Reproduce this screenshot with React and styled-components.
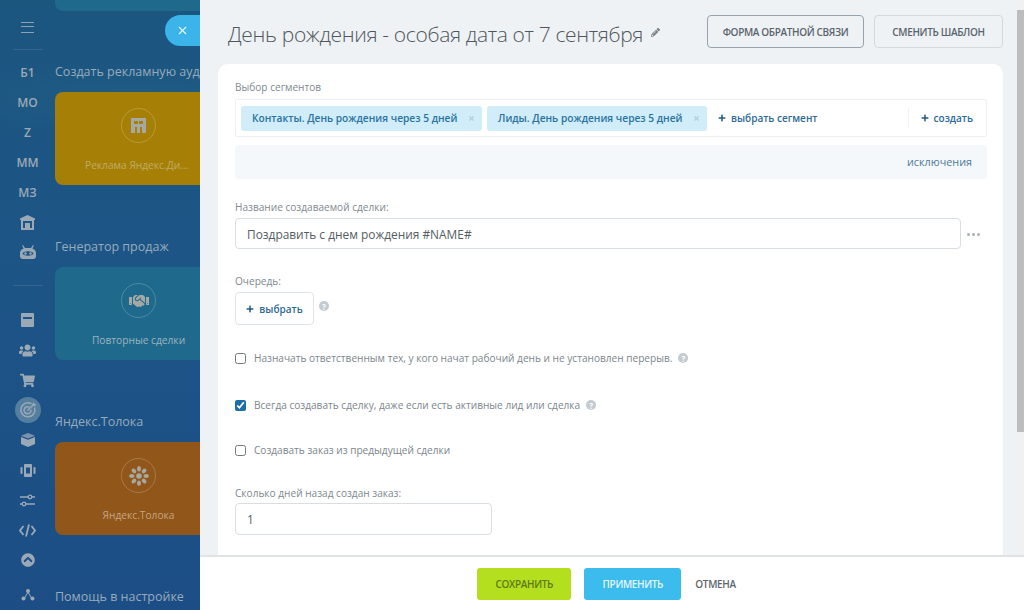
// App.jsx
import React from 'react';
import styled, { createGlobalStyle } from 'styled-components';
import {
  FaUsers,
  FaShoppingCart,
  FaHandshake,
  FaChevronCircleUp,
  FaPencilAlt,
  FaTimes,
  FaPlus,
} from 'react-icons/fa';
import { X } from 'lucide-react';

const GlobalStyle = createGlobalStyle`
  html, body {
    margin: 0;
    padding: 0;
    height: 100%;
    overflow: hidden;
  }
  body {
    font-family: "Open Sans", "Liberation Sans", sans-serif;
  }
  * { box-sizing: border-box; }
`;

const Page = styled.div`
  position: relative;
  display: flex;
  width: 1024px;
  height: 610px;
  overflow: hidden;
`;

/* ---------- dimmed background page ---------- */

const Backdrop = styled.div`
  display: flex;
  width: 200px;
  height: 610px;
  flex-shrink: 0;
  overflow: hidden;
  background:
    radial-gradient(ellipse 200px 36px at 130px 96px, rgba(40, 105, 135, 0.3), transparent),
    linear-gradient(180deg, #1b567f 0%, #1d5586 40%, #1c4e85 100%);
`;

const Rail = styled.nav`
  display: flex;
  flex-direction: column;
  align-items: center;
  width: 55px;
  flex-shrink: 0;
  padding-top: 12px;
  color: #97a6b5;
`;

const RailItem = styled.div`
  display: flex;
  align-items: center;
  justify-content: center;
  width: 100%;
  height: 30px;
  flex-shrink: 0;
  margin-top: ${(p) => p.$top || 0}px;
  font-size: 12px;
  font-weight: 600;
  color: #9ba9b7;
`;

const ActiveDot = styled.div`
  display: flex;
  align-items: center;
  justify-content: center;
  width: 26px;
  height: 26px;
  border-radius: 50%;
  background: #557f9f;
`;

const RailDivider = styled.div`
  width: 30px;
  height: 1px;
  flex-shrink: 0;
  background: #336590;
  margin: ${(p) => p.$margin};
`;

const Burger = styled.div`
  width: 13px;
  height: 11px;
  border-top: 1.5px solid #8ea2b4;
  border-bottom: 1.5px solid #8ea2b4;
  position: relative;

  &::after {
    content: '';
    position: absolute;
    left: 0;
    right: 0;
    top: 3px;
    height: 1.5px;
    background: #8ea2b4;
  }
`;

const Feed = styled.div`
  width: 165px;
  flex-shrink: 0;
`;

const TopCard = styled.div`
  height: 11px;
  background: #1f6a8c;
  border-radius: 0 0 8px 8px;
  margin-bottom: 51px;
`;

const SectionTitle = styled.div`
  height: 20px;
  line-height: 20px;
  margin-bottom: 10px;
  font-size: 12.5px;
  color: #97abbc;
  white-space: nowrap;
`;

const Tile = styled.div`
  display: flex;
  flex-direction: column;
  align-items: center;
  height: 93px;
  margin-bottom: 52px;
  padding: 16px 26px 0 28px;
  border-radius: 8px;
  background: ${(p) => p.$color};
  color: ${(p) => p.$ink};
`;

const TileIcon = styled.div`
  display: flex;
  align-items: center;
  justify-content: center;
  width: 35px;
  height: 35px;
  border-radius: 50%;
  border: 1px solid rgba(255, 255, 255, 0.2);
  color: #a6a8a4;
  flex-shrink: 0;
`;

const TileLabel = styled.div`
  width: 107px;
  margin-top: 14px;
  font-size: 10.2px;
  font-weight: 500;
  line-height: 16px;
  text-align: center;
  white-space: nowrap;
  overflow: hidden;
  text-overflow: ellipsis;
`;

const CloseTab = styled.div`
  position: absolute;
  left: 165px;
  top: 15px;
  width: 35px;
  height: 31px;
  display: flex;
  align-items: center;
  justify-content: center;
  border-radius: 16px 0 0 16px;
  background: #3bb4e9;
  color: #e8f7fd;
`;

/* ---------- slide panel ---------- */

const Panel = styled.div`
  display: flex;
  flex-direction: column;
  flex: 1;
  min-width: 0;
  height: 610px;
  background: #eef2f5;
`;

const PanelBody = styled.div`
  display: flex;
  flex: 1;
  min-height: 0;
`;

const Scroller = styled.div`
  flex: 1;
  min-width: 0;
  overflow: hidden;
  padding: 15px 14px 0 18px;
`;

const ScrollTrack = styled.div`
  width: 7px;
  flex-shrink: 0;
  padding-top: 10px;
  background: #f1f1f1;
`;

const ScrollThumb = styled.div`
  height: 422px;
  background: #bdbdbd;
`;

const Header = styled.div`
  display: flex;
  align-items: flex-start;
  height: 49px;
  padding-left: 10px;
`;

const Title = styled.h1`
  display: flex;
  align-items: center;
  gap: 8px;
  flex: 1;
  margin: 0;
  height: 38px;
  font-size: 21px;
  font-weight: 300;
  letter-spacing: -0.35px;
  color: #50575c;
  white-space: nowrap;
`;

const EditMark = styled.span`
  display: flex;
  color: #777f85;
  margin-top: -4px;
`;

const HeaderButton = styled.div`
  display: flex;
  align-items: center;
  justify-content: center;
  width: ${(p) => p.$width}px;
  height: 33px;
  margin-left: ${(p) => p.$gap}px;
  border: 1px solid ${(p) => (p.$strong ? '#98a4ad' : '#d3dade')};
  border-radius: 4px;
  font-size: 10px;
  font-weight: 600;
  letter-spacing: -0.35px;
  color: #5a646c;
`;

const Card = styled.div`
  padding: 16px 16px 0 17px;
  min-height: 560px;
  background: #fff;
  border-radius: 10px 10px 0 0;
`;

const Label = styled.div`
  font-size: 10.1px;
  line-height: 15px;
  color: #80898f;
  margin-top: ${(p) => p.$top || 0}px;
  margin-bottom: ${(p) => p.$bottom || 4}px;
`;

const SegmentBox = styled.div`
  display: flex;
  align-items: center;
  height: 38px;
  padding: 0 13px 0 5px;
  border: 1px solid #edf0f2;
  border-radius: 2px;
`;

const Segment = styled.div`
  display: flex;
  align-items: center;
  justify-content: space-between;
  width: ${(p) => p.$width}px;
  height: 25px;
  margin-right: 5px;
  padding: 0 7px 0 11px;
  border-radius: 3px;
  background: #d0edf9;
  font-size: 10.2px;
  font-weight: 600;
  color: #2a729f;
  white-space: nowrap;
`;

const SegmentX = styled.span`
  display: flex;
  color: #b4cfdc;
`;

const AddLink = styled.div`
  display: flex;
  align-items: center;
  gap: 5px;
  font-size: 10px;
  font-weight: 600;
  color: #2d6a96;
  white-space: nowrap;
`;

const PlusMark = styled.span`
  display: flex;
  color: #1f5a88;
`;

const PickLink = styled(AddLink)`
  flex: 1;
  margin-left: 6px;
`;

const CreateLink = styled(AddLink)`
  height: 20px;
  padding-left: 12px;
  border-left: 1px solid #f0f3f5;
`;

const ExceptionsBar = styled.div`
  display: flex;
  align-items: center;
  justify-content: flex-end;
  height: 34px;
  margin-top: 8px;
  padding: 0 15px 2px 0;
  border-radius: 4px;
  background: #f5f8fa;
  font-size: 10.8px;
  color: #4f7b9b;
`;

const NameRow = styled.div`
  display: flex;
  align-items: center;
`;

const Field = styled.div`
  display: flex;
  align-items: center;
  width: ${(p) => p.$width}px;
  height: ${(p) => p.$height}px;
  padding-left: 11px;
  border: 1px solid #d9dee2;
  border-radius: 4px;
  font-size: 11.9px;
  color: #555d63;
`;

const MoreDots = styled.div`
  display: flex;
  gap: 2px;
  margin-left: 6px;
  margin-top: 2px;
`;

const Dot = styled.span`
  width: 3px;
  height: 3px;
  border-radius: 50%;
  background: #a8b1b8;
`;

const QueueRow = styled.div`
  display: flex;
  align-items: flex-start;
  gap: 5px;
`;

const QueueButton = styled(AddLink)`
  justify-content: center;
  width: 79px;
  height: 33px;
  border: 1px solid #dfe4e8;
  border-radius: 4px;
`;

const Help = styled.span`
  display: inline-flex;
  align-items: center;
  justify-content: center;
  width: 10px;
  height: 10px;
  flex-shrink: 0;
  margin-top: ${(p) => p.$top || 0}px;
  border-radius: 50%;
  background: #c3cad0;
  color: #fff;
  font-size: 8px;
  font-weight: 700;
`;

const CheckRow = styled.label`
  display: flex;
  align-items: center;
  height: 16px;
  margin-top: ${(p) => p.$top}px;
  font-size: 10.1px;
  color: #7d868c;
  white-space: nowrap;
`;

const CheckBox = styled.input`
  width: 11px;
  height: 11px;
  margin: 0 8px 0 0;
  flex-shrink: 0;
  accent-color: #1c6ea8;
`;

const CheckHelp = styled(Help)`
  margin-left: 6px;
`;

const Footer = styled.div`
  display: flex;
  align-items: center;
  justify-content: center;
  height: 55px;
  flex-shrink: 0;
  padding-right: 11px;
  padding-top: 1px;
  border-top: 2px solid #dfe3e6;
  background: #fff;
`;

const FooterButton = styled.div`
  display: flex;
  align-items: center;
  justify-content: center;
  width: ${(p) => p.$width}px;
  height: 32px;
  margin-right: ${(p) => p.$gap}px;
  border-radius: 3px;
  background: ${(p) => p.$bg};
  color: ${(p) => p.$ink};
  font-size: 10px;
  font-weight: 600;
  letter-spacing: -0.35px;
`;

const CancelLink = styled.div`
  font-size: 10px;
  font-weight: 600;
  letter-spacing: -0.35px;
  color: #5d666c;
`;

/* ---------- drawn icons ---------- */

const WarehouseIcon = () => (
  <svg width="15" height="15" viewBox="0 0 15 15" fill="currentColor">
    <path d="M7.500 0L15 3.500V5h-1v10H1V5H0V3.500zM3 6v7h9V6zm2 2h5v5H5z" fillRule="evenodd" />
    <rect x="6.500" y="9.500" width="2" height="2" />
  </svg>
);

const AndroidIcon = () => (
  <svg width="16" height="14" viewBox="0 0 16 14" fill="currentColor">
    <path d="M3 0l2 3h6l2-3 .8.5L12.400 3.400C14.600 4.200 16 6 16 8v3a3 3 0 0 1-3 3H3a3 3 0 0 1-3-3V8c0-2 1.400-3.800 3.600-4.600L2.200.5z" />
    <ellipse cx="8" cy="8.500" rx="5.500" ry="2.200" fill="#1d5586" />
    <circle cx="5.500" cy="8.500" r="1.200" />
    <circle cx="10.500" cy="8.500" r="1.200" />
  </svg>
);

const CalendarBoxIcon = () => (
  <svg width="13" height="14" viewBox="0 0 13 14" fill="currentColor">
    <path d="M1 0h11a1 1 0 0 1 1 1v12a1 1 0 0 1-1 1H1a1 1 0 0 1-1-1V1a1 1 0 0 1 1-1zm1 4v2h9V4z" fillRule="evenodd" />
  </svg>
);

const TargetIcon = () => (
  <svg width="18" height="18" viewBox="0 0 18 18" fill="none" stroke="currentColor" strokeWidth="1.400">
    <path d="M12.500 2.800A7 7 0 1 0 15.500 6.500" />
    <path d="M10.300 6.200A3.500 3.500 0 1 0 12 8.600" />
    <path d="M8.500 9.500L15 3" />
    <path d="M13 3.500L15 1l.5 2L17.500 3.500 15 5.500z" fill="currentColor" stroke="none" />
  </svg>
);

const CubeIcon = () => (
  <svg width="14" height="14" viewBox="0 0 14 14" fill="currentColor">
    <path d="M7 0l7 2.800L7 5.600 0 2.800z" opacity="0.75" />
    <path d="M0 4l7 2.800L14 4v7l-7 3-7-3z" />
  </svg>
);

const VibrateIcon = () => (
  <svg width="16" height="13" viewBox="0 0 16 13" fill="currentColor">
    <path d="M5 0h6a1 1 0 0 1 1 1v11a1 1 0 0 1-1 1H5a1 1 0 0 1-1-1V1a1 1 0 0 1 1-1zm1 3.500v6h4v-6z" fillRule="evenodd" />
    <rect x="0.500" y="3" width="2" height="7" rx="0.800" />
    <rect x="13.500" y="3" width="2" height="7" rx="0.800" />
  </svg>
);

const SlidersIcon = () => (
  <svg width="15" height="13" viewBox="0 0 15 13" fill="none" stroke="currentColor" strokeWidth="1.300">
    <path d="M0 3h8M12 3h3M0 10h2M6 10h9" />
    <circle cx="10" cy="3" r="1.800" />
    <circle cx="4" cy="10" r="1.800" />
  </svg>
);

const CodeIcon = () => (
  <svg width="17" height="13" viewBox="0 0 17 13" fill="none" stroke="currentColor" strokeWidth="1.800">
    <path d="M4.500 2L1 6.500 4.500 11M12.500 2L16 6.500 12.500 11M10 0.500L7 12.500" />
  </svg>
);

const NodesIcon = () => (
  <svg width="14" height="13" viewBox="0 0 14 13" fill="currentColor">
    <circle cx="7" cy="3" r="2" />
    <circle cx="2.500" cy="10.500" r="2" />
    <circle cx="11.500" cy="10.500" r="2" />
    <path d="M6.500 4l-3.500 6 .8.400 3.200-5.500 3.200 5.500.8-.4L7.500 4z" />
  </svg>
);

const StoreIcon = () => (
  <svg width="15" height="15" viewBox="0 0 15 15" fill="currentColor">
    <path d="M0 0h15v15h-4V9H9v6H6V9H4v6H0zm3 3v3h4V3zm5 0v3h4V3z" fillRule="evenodd" />
  </svg>
);

const FlowerIcon = () => (
  <svg width="20" height="20" viewBox="0 0 20 20" fill="currentColor">
    {[0, 45, 90, 135, 180, 225, 270, 315].map((deg) => (
      <ellipse key={deg} cx="10" cy="2.800" rx="2" ry="2.700" transform={`rotate(${deg} 10 10)`} />
    ))}
    <circle cx="10" cy="10" r="2.800" />
  </svg>
);

const railTexts = ['Б1', 'МО', 'Z', 'ММ', 'МЗ'];

const tiles = [
  {
    title: 'Создать рекламную аудиторию',
    label: 'Реклама Яндекс.Директ',
    color: '#a68006',
    ink: '#c0ab66',
    icon: <StoreIcon />,
  },
  {
    title: 'Генератор продаж',
    label: 'Повторные сделки',
    color: '#1f6a8c',
    ink: '#9db3bf',
    icon: <FaHandshake size={20} />,
  },
  {
    title: 'Яндекс.Толока',
    label: 'Яндекс.Толока',
    color: '#915619',
    ink: '#c6a583',
    icon: <FlowerIcon />,
  },
];

const App = () => (
  <Page>
    <GlobalStyle />
    <Backdrop>
      <Rail>
        <RailItem><Burger /></RailItem>
        <RailDivider $margin="7px 0" />
        {railTexts.map((text) => (
          <RailItem key={text}>{text}</RailItem>
        ))}
        <RailItem><WarehouseIcon /></RailItem>
        <RailItem><AndroidIcon /></RailItem>
        <RailDivider $margin="18px 0 19px" />
        <RailItem><CalendarBoxIcon /></RailItem>
        <RailItem><FaUsers size={17} /></RailItem>
        <RailItem><FaShoppingCart size={15} /></RailItem>
        <RailItem><ActiveDot><TargetIcon /></ActiveDot></RailItem>
        <RailItem><CubeIcon /></RailItem>
        <RailItem><VibrateIcon /></RailItem>
        <RailItem><SlidersIcon /></RailItem>
        <RailItem><CodeIcon /></RailItem>
        <RailItem><FaChevronCircleUp size={14} /></RailItem>
        <RailItem $top={4}><NodesIcon /></RailItem>
      </Rail>
      <Feed>
        <TopCard />
        {tiles.map((tile) => (
          <div key={tile.title}>
            <SectionTitle>{tile.title}</SectionTitle>
            <Tile $color={tile.color} $ink={tile.ink}>
              <TileIcon>{tile.icon}</TileIcon>
              <TileLabel>{tile.label}</TileLabel>
            </Tile>
          </div>
        ))}
        <SectionTitle>Помощь в настройке</SectionTitle>
      </Feed>
    </Backdrop>

    <CloseTab><X size={13} strokeWidth={2} /></CloseTab>

    <Panel>
      <PanelBody>
        <Scroller>
          <Header>
            <Title>
              День рождения - особая дата от 7 сентября
              <EditMark><FaPencilAlt size={9} /></EditMark>
            </Title>
            <HeaderButton $width={157} $gap={0} $strong>ФОРМА ОБРАТНОЙ СВЯЗИ</HeaderButton>
            <HeaderButton $width={129} $gap={10}>СМЕНИТЬ ШАБЛОН</HeaderButton>
          </Header>
          <Card>
            <Label>Выбор сегментов</Label>
            <SegmentBox>
              <Segment $width={241}>
                Контакты. День рождения через 5 дней
                <SegmentX><FaTimes size={7} /></SegmentX>
              </Segment>
              <Segment $width={220}>
                Лиды. День рождения через 5 дней
                <SegmentX><FaTimes size={7} /></SegmentX>
              </Segment>
              <PickLink><PlusMark><FaPlus size={8} /></PlusMark>выбрать сегмент</PickLink>
              <CreateLink><PlusMark><FaPlus size={8} /></PlusMark>создать</CreateLink>
            </SegmentBox>
            <ExceptionsBar>исключения</ExceptionsBar>

            <Label $top={21} $bottom={3}>Название создаваемой сделки:</Label>
            <NameRow>
              <Field $width={726} $height={31}>Поздравить с днем рождения #NAME#</Field>
              <MoreDots><Dot /><Dot /><Dot /></MoreDots>
            </NameRow>

            <Label $top={25} $bottom={3}>Очередь:</Label>
            <QueueRow>
              <QueueButton><PlusMark><FaPlus size={8} /></PlusMark>выбрать</QueueButton>
              <Help $top={9}>?</Help>
            </QueueRow>

            <CheckRow $top={25}>
              <CheckBox type="checkbox" readOnly />
              Назначать ответственным тех, у кого начат рабочий день и не установлен перерыв.
              <CheckHelp>?</CheckHelp>
            </CheckRow>
            <CheckRow $top={31}>
              <CheckBox type="checkbox" readOnly checked />
              Всегда создавать сделку, даже если есть активные лид или сделка
              <CheckHelp>?</CheckHelp>
            </CheckRow>
            <CheckRow $top={29}>
              <CheckBox type="checkbox" readOnly />
              Создавать заказ из предыдущей сделки
            </CheckRow>

            <Label $top={28} $bottom={2}>Сколько дней назад создан заказ:</Label>
            <Field $width={257} $height={32}>1</Field>
          </Card>
        </Scroller>
        <ScrollTrack><ScrollThumb /></ScrollTrack>
      </PanelBody>
      <Footer>
        <FooterButton $width={94} $gap={13} $bg="#b3df1f" $ink="#5f7a14">СОХРАНИТЬ</FooterButton>
        <FooterButton $width={97} $gap={14} $bg="#3cbcec" $ink="#e4f6fd">ПРИМЕНИТЬ</FooterButton>
        <CancelLink>ОТМЕНА</CancelLink>
      </Footer>
    </Panel>
  </Page>
);

export default App;
